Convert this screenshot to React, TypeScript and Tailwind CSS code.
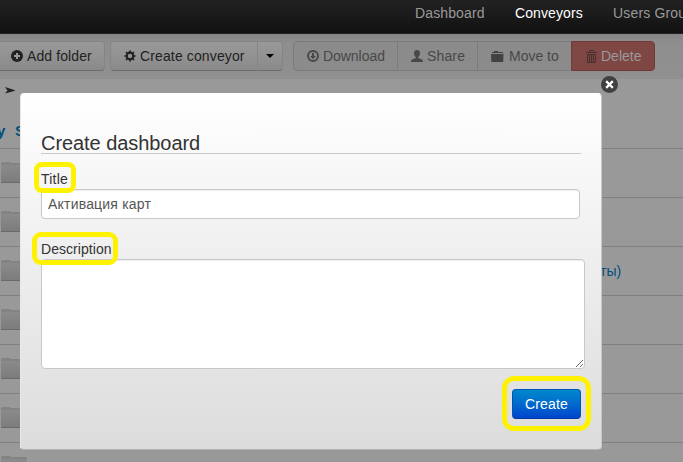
import React from "react";

const rows = ["", "", "ты)", "", "", ""];

function Folder() {
  return (
    <svg width="26" height="23" viewBox="0 0 26 23" className="ml-px shrink-0">
      <defs>
        <linearGradient id="folder" x1="0" y1="0" x2="0" y2="1">
          <stop offset="0" stopColor="#8b8b8b" />
          <stop offset="1" stopColor="#7c7c7c" />
        </linearGradient>
      </defs>
      <path d="M0 4V2.500L1 1H9L10 2H25L26 3V4Z" fill="#838383" />
      <rect x="0" y="4" width="26" height="17" fill="url(#folder)" />
      <path d="M0 21.500H26" stroke="#6a6a6a" />
    </svg>
  );
}

function PlusIcon() {
  return (
    <svg width="12" height="12" viewBox="0 0 12 12" className="shrink-0">
      <circle cx="6" cy="6" r="6" fill="#222" />
      <path d="M6 3v6M3 6h6" stroke="#999" strokeWidth="2" />
    </svg>
  );
}

function GearIcon() {
  return (
    <svg width="12" height="12" viewBox="0 0 12 12" fill="none" stroke="#222" className="shrink-0">
      <circle cx="6" cy="6" r="3.3" strokeWidth="2.2" />
      <path d="M6 .4v2M6 9.6v2M.4 6h2M9.6 6h2M2 2l1.4 1.4M8.6 8.6L10 10M10 2L8.6 3.4M3.400 8.600L2 10" strokeWidth="1.700" />
    </svg>
  );
}

function DownloadIcon() {
  return (
    <svg width="12" height="12" viewBox="0 0 12 12" className="shrink-0">
      <circle cx="6" cy="6" r="5" fill="none" stroke="#484848" strokeWidth="1.900" />
      <path d="M5 3h2v3h2L6 9 3 6h2z" fill="#484848" />
    </svg>
  );
}

function UserIcon() {
  return (
    <svg width="12" height="12" viewBox="0 0 12 12" fill="#484848" className="shrink-0">
      <path d="M6 0C4 0 3 1.3 3 3c0 2 .8 3.400 1.800 4v1L1 9.500Q0 10 0 12h12q0-2-1-2.500L7.200 8V7C8.200 6.400 9 5 9 3c0-1.700-1-3-3-3z" />
    </svg>
  );
}

function MoveIcon() {
  return (
    <svg width="13" height="12" viewBox="0 0 13 12" fill="#424242" className="shrink-0">
      <path d="M1 3V2h2V1h4v1h5v1zM0 4h12.500l-.3 8H.4z" />
    </svg>
  );
}

function TrashIcon() {
  return (
    <svg width="11" height="13" viewBox="0 0 11 13" fill="none" stroke="#4a302f" className="shrink-0">
      <path d="M0 2.500h11M3.500 2V.5h4V2M1.500 4.500h8v8h-8z" />
      <path d="M3.500 4v8M5.500 4v8M7.500 4v8" strokeWidth="1.100" />
    </svg>
  );
}

export default function App() {
  return (
    <div className="relative h-[462px] w-[683px] overflow-hidden bg-[#999] font-['Liberation_Sans',Arial,sans-serif] text-[14px] text-[#222]">
      <nav className="flex h-[34px] border-b border-[#252027] bg-linear-to-b from-[#222] to-[#111] pl-[415px] text-[14px] leading-[26px] whitespace-nowrap text-[#999]">
        <span className="w-[100px] shrink-0 tracking-[.12px]">Dashboard</span>
        <span className="w-[98px] shrink-0 tracking-[.1px] text-white">Conveyors</span>
        <span className="shrink-0 tracking-[.17px]">Users Group</span>
      </nav>

      <div className="flex h-[45px] bg-linear-to-b from-[#858585] via-[#8e8e8e] via-20% to-[#909090] pt-[7px] leading-[28px] whitespace-nowrap">
        <div className="flex h-[30px] w-[105px] items-center gap-[4px] rounded-r-[4px] border border-l-0 border-[#858585] border-b-[#6b6b6b] bg-linear-to-b from-[#999] to-[#8a8a8a] pl-[11px]">
          <PlusIcon /><span className="tracking-[.1px]">Add folder</span>
        </div>
        <div className="ml-[5px] flex h-[30px] w-[148px] items-center gap-[4px] rounded-l-[4px] border border-[#858585] border-b-[#6b6b6b] bg-linear-to-b from-[#999] to-[#8a8a8a] pl-[13px]">
          <GearIcon /><span className="tracking-[.13px]">Create conveyor</span>
        </div>
        <div className="flex h-[30px] w-[25px] items-center justify-center rounded-r-[4px] border border-l-0 border-[#858585] border-b-[#6b6b6b] bg-linear-to-b from-[#999] to-[#8a8a8a]">
          <svg width="8" height="4" viewBox="0 0 8 4"><path d="M0 0h8L4 4z" fill="#000" /></svg>
        </div>
        <div className="ml-[10px] flex h-[30px] text-[#484848]">
          <div className="flex w-[105px] items-center gap-[4px] rounded-l-[4px] border border-[#7b7b7b] bg-[#8b8b8b] pl-[13px]">
            <DownloadIcon /><span className="tracking-[-.05px]">Download</span>
          </div>
          <div className="flex w-[80px] items-center gap-[4px] border-y border-r border-[#7b7b7b] bg-[#8b8b8b] pl-[13px]">
            <UserIcon /><span className="tracking-[.15px]">Share</span>
          </div>
          <div className="flex w-[93px] items-center gap-[5px] border-y border-[#7b7b7b] bg-[#8b8b8b] pl-[13px]">
            <MoveIcon /><span>Move to</span>
          </div>
          <div className="flex w-[84px] items-center gap-[4px] rounded-r-[4px] border border-[#733b38] bg-[#7e4744] pl-[14px] text-[#999]">
            <TrashIcon /><span>Delete</span>
          </div>
        </div>
      </div>

      <div className="flex h-[24px] pt-[8px] pl-[5px]">
        <svg width="10" height="7" viewBox="0 0 10 7"><path d="M0 0L10 3.200v.6L0 6.500 2.500 3.500z" fill="#222" /></svg>
      </div>
      <div className="flex h-[46px] border-b border-[#808080] pt-[18px] text-[15px] leading-[20px] font-bold text-[#00507a]">
        <span className="-ml-[3px] w-[18px]">y</span><span>S</span>
      </div>
      {rows.map((name, i) => (
        <div key={i} className="flex h-[49px] border-b border-[#808080] pt-[12px]">
          <Folder />
          <span className="ml-[573px] leading-[24px] text-[#00507a]">{name}</span>
        </div>
      ))}
      <div className="flex pt-[12px]"><Folder /></div>

      <div className="absolute top-[93px] left-[20px] flex h-[357px] w-[582px] flex-col rounded-[4px] border border-t-white border-r-[#c8c8c8] border-b-[#b0b0b0] border-l-[#e8e8e8] bg-linear-to-b from-white to-[#dcdcdc] pl-[20px] text-[#333]">
        <h1 className="mt-[37px] h-[23px] w-[540px] border-b border-[#c8c8c8] text-[20px] leading-[24px] tracking-[-.06px]">Create dashboard</h1>
        <label className="mt-[15px] h-[20px] leading-[20px] tracking-[.2px]">Title</label>
        <input defaultValue="Активация карт" className="h-[30px] w-[539px] rounded-[4px] border border-[#c8c8c8] bg-white px-[6px] text-[14px] tracking-[.2px] text-[#555] shadow-[inset_0_1px_1px_#00000013] outline-none" />
        <label className="mt-[20px] h-[20px] leading-[20px] tracking-[.05px]">Description</label>
        <textarea className="h-[110px] w-[544px] shrink-0 rounded-[4px] border border-[#c8c8c8] bg-white shadow-[inset_0_1px_1px_#00000013] outline-none" />
        <button className="mt-[20px] ml-[471px] h-[30px] w-[69px] shrink-0 rounded-[4px] border border-[#0055b0] border-b-[#003a9e] bg-linear-to-b from-[#0088cc] to-[#0044cc] text-[14px] tracking-[.2px] text-white">Create</button>
      </div>

      <svg className="absolute top-[76px] left-[601px]" width="17" height="17" viewBox="0 0 17 17">
        <circle cx="8.500" cy="8.500" r="8.500" fill="#404040" />
        <path d="M6 6l5 5M11 6l-5 5" stroke="white" strokeWidth="2.300" strokeLinecap="square" />
      </svg>
      <div className="pointer-events-none absolute top-[162px] left-[34px] h-[31px] w-[42px] rounded-[8px] border-[5px] border-[#fff200]" />
      <div className="pointer-events-none absolute top-[232px] left-[32px] h-[33px] w-[86px] rounded-[9px] border-[5px] border-[#fff200]" />
      <div className="pointer-events-none absolute top-[376px] left-[502px] h-[55px] w-[89px] rounded-[12px] border-[5px] border-[#fff200]" />
    </div>
  );
}
